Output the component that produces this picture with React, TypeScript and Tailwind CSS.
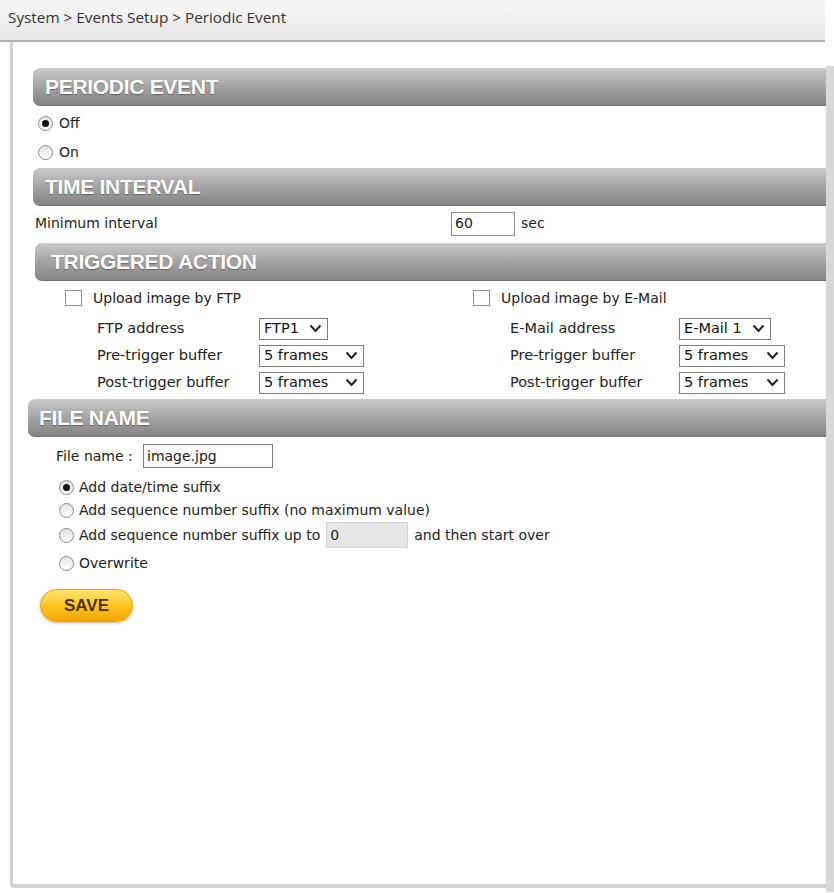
import React from 'react'

const body = { fontFamily: '"DejaVu Sans", Verdana, sans-serif' }

const Header = ({ title, className = '' }: { title: string; className?: string }) => (
  <div
    className={`h-[38px] flex items-center rounded-l-[7px] bg-gradient-to-b from-[#cacaca] via-[#a4a4a4] to-[#848484] border-b border-[#6f6f6f] ${className}`}
  >
    <span
      className="text-white font-bold text-[21px] tracking-[-0.3px] [text-shadow:0_1px_1px_rgba(0,0,0,0.35)]"
      style={{ fontFamily: '"Liberation Sans", Arial, sans-serif' }}
    >
      {title}
    </span>
  </div>
)

const Radio = ({ checked = false }: { checked?: boolean }) => (
  <span className="inline-flex w-[15px] h-[15px] rounded-full border border-[#8a8a8a] bg-gradient-to-b from-[#e2e2e2] to-white items-center justify-center shrink-0">
    {checked && <span className="w-[7px] h-[7px] rounded-full bg-[#111]" />}
  </span>
)

const Checkbox = () => (
  <span className="inline-block w-[17px] h-[16px] border border-[#8f8f8f] bg-white shrink-0" />
)

const Chevron = () => (
  <svg width="13" height="9" viewBox="0 0 13 9" className="shrink-0">
    <polyline points="1.5,1.5 6.5,7 11.5,1.5" fill="none" stroke="#222" strokeWidth="2" />
  </svg>
)

const Select = ({ value, width }: { value: string; width: string }) => (
  <div className={`${width} h-[22px] border border-[#7d7d7d] bg-white flex items-center justify-between pl-[4px] pr-[5px] text-[14.5px] text-[#111]`}>
    <span>{value}</span>
    <Chevron />
  </div>
)

const Row = ({ label, labelX, children }: { label: string; labelX: string; children: React.ReactNode }) => (
  <div className="h-[27px] flex items-center">
    <span className={`${labelX} text-[14.5px] text-[#222]`}>{label}</span>
    {children}
  </div>
)

export default function App() {
  return (
    <div className="w-[834px] h-[893px] bg-white overflow-hidden text-[#222]" style={body}>
      {/* breadcrumb bar */}
      <div className="w-[825px] h-[42px] bg-gradient-to-b from-[#f7f7f7] to-[#e6e6e6] border-b-2 border-[#b4b4b4] flex items-start pt-[6px] pl-[8px]">
        <span className="text-[15.3px] text-[#333]" style={{ fontFamily: '"Open Sans", Tahoma, sans-serif' }}>
          System &gt; Events Setup &gt; Periodic Event
        </span>
      </div>

      <div className="flex h-[851px]">
        {/* main panel */}
        <div className="w-[825px] h-[846px] ml-[10px] border-l-[3px] border-b-[4px] border-[#d2d2d2] rounded-bl-[4px] pt-[26px]">
          {/* PERIODIC EVENT */}
          <Header title="PERIODIC EVENT" className="ml-[20px] pl-[12px]" />
          <div className="mt-[3px] h-[29px] flex items-center pl-[25px] gap-[6px] text-[14px]">
            <Radio checked />
            <span>Off</span>
          </div>
          <div className="h-[29px] flex items-center pl-[25px] gap-[6px] text-[14px]">
            <Radio />
            <span>On</span>
          </div>

          {/* TIME INTERVAL */}
          <Header title="TIME INTERVAL" className="ml-[20px] pl-[12px] mt-[1px]" />
          <div className="h-[31px] flex items-center mt-[2px] text-[14px]">
            <span className="ml-[22px] w-[416px]">Minimum interval</span>
            <div className="w-[64px] h-[24px] border border-[#8c8c8c] bg-white flex items-center pl-[3px]">60</div>
            <span className="ml-[6px]">sec</span>
          </div>

          {/* TRIGGERED ACTION */}
          <Header title="TRIGGERED ACTION" className="ml-[22px] pl-[16px] mt-[4px]" />
          <div className="flex pt-[4px]">
            <div className="w-[410px]">
              <div className="h-[26px] flex items-center pl-[52px] text-[14px]">
                <Checkbox />
                <span className="ml-[11px]">Upload image by FTP</span>
              </div>
              <div className="mt-[4px]">
                <Row label="FTP address" labelX="ml-[84px] w-[162px]">
                  <Select value="FTP1" width="w-[69px]" />
                </Row>
                <Row label="Pre-trigger buffer" labelX="ml-[84px] w-[162px]">
                  <Select value="5 frames" width="w-[105px]" />
                </Row>
                <Row label="Post-trigger buffer" labelX="ml-[84px] w-[162px]">
                  <Select value="5 frames" width="w-[105px]" />
                </Row>
              </div>
            </div>
            <div className="flex-1">
              <div className="h-[26px] flex items-center pl-[50px] text-[14px]">
                <Checkbox />
                <span className="ml-[11px]">Upload image by E-Mail</span>
              </div>
              <div className="mt-[4px]">
                <Row label="E-Mail address" labelX="ml-[87px] w-[169px]">
                  <Select value="E-Mail 1" width="w-[92px]" />
                </Row>
                <Row label="Pre-trigger buffer" labelX="ml-[87px] w-[169px]">
                  <Select value="5 frames" width="w-[106px]" />
                </Row>
                <Row label="Post-trigger buffer" labelX="ml-[87px] w-[169px]">
                  <Select value="5 frames" width="w-[106px]" />
                </Row>
              </div>
            </div>
          </div>

          {/* FILE NAME */}
          <Header title="FILE NAME" className="ml-[15px] pl-[11px] mt-[3px]" />
          <div className="mt-[7px] h-[24px] flex items-center text-[14px]">
            <span className="ml-[43px] w-[87px]">File name :</span>
            <div className="w-[130px] h-[24px] border border-[#7a7a7a] bg-white flex items-center pl-[3px]">image.jpg</div>
          </div>
          <div className="mt-[7px] pl-[46px] text-[14px]">
            <div className="h-[24px] flex items-center gap-[5px]">
              <Radio checked />
              <span>Add date/time suffix</span>
            </div>
            <div className="h-[23px] flex items-center gap-[5px]">
              <Radio />
              <span>Add sequence number suffix (no maximum value)</span>
            </div>
            <div className="h-[26px] flex items-center gap-[5px]">
              <Radio />
              <span>Add sequence number suffix up to</span>
              <div className="w-[82px] h-[26px] bg-[#e6e6e6] border border-[#d4d4d4] flex items-center pl-[3px] ml-[1px]">0</div>
              <span className="ml-[1px]">and then start over</span>
            </div>
            <div className="h-[27px] mt-[2px] flex items-center gap-[5px]">
              <Radio />
              <span>Overwrite</span>
            </div>
          </div>

          <div className="mt-[12px] ml-[27px]">
            <button
              className="w-[93px] h-[33px] rounded-full bg-gradient-to-b from-[#ffe46a] via-[#ffc61f] to-[#f2a400] border border-[#e7a200] shadow-[0_1px_3px_rgba(160,110,0,0.5)] text-[#4b3200] font-bold text-[17px]"
              style={{ fontFamily: '"Liberation Sans", Arial, sans-serif' }}
            >
              SAVE
            </button>
          </div>
        </div>

        {/* right strip */}
        <div className="w-[8px] ml-[-9px] mt-[24px] h-[826px] bg-[#d8d8d8]" />
      </div>
    </div>
  )
}
